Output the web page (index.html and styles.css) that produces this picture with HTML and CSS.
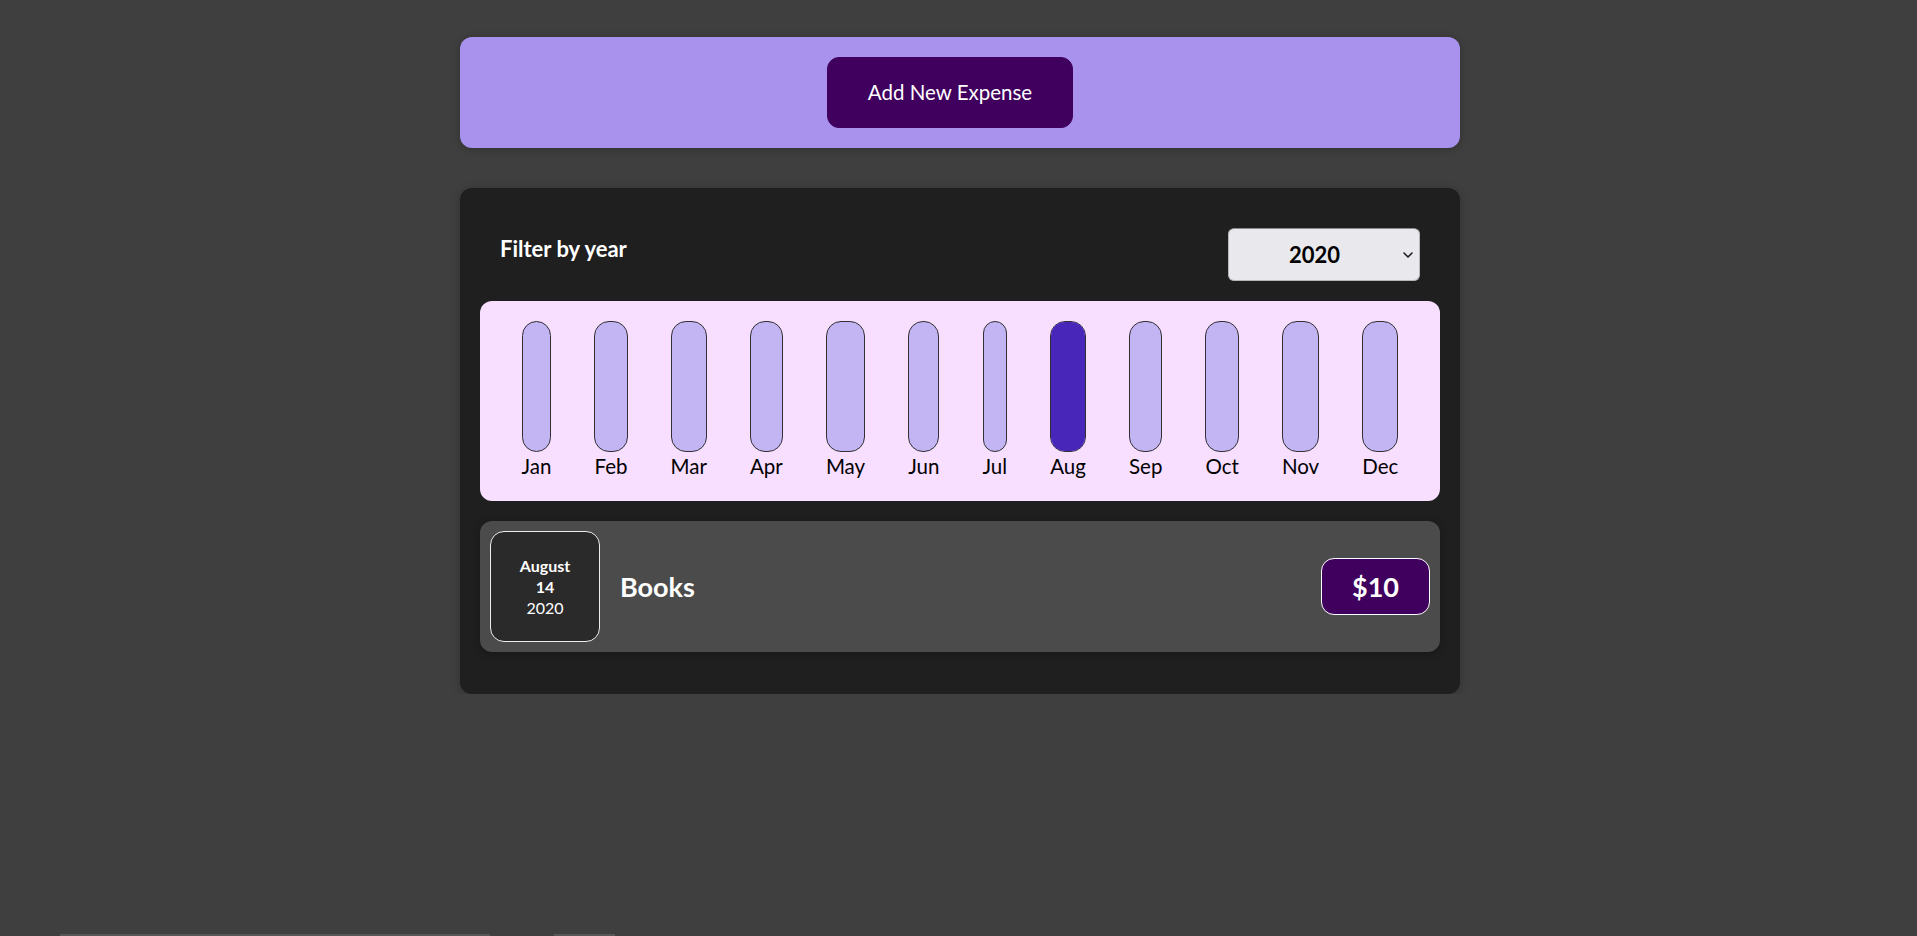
FILE: index.html
```html
<!DOCTYPE html>
<html lang="en">
<head>
<meta charset="utf-8">
<title>Expense Tracker</title>
<link rel="stylesheet" href="styles.css">
</head>
<body>
<div class="app">
  <div class="new-expense">
    <button class="new-expense__btn" type="button">Add New Expense</button>
  </div>

  <div class="expenses">
    <div class="expenses-filter">
      <div class="expenses-filter__control">
        <label class="expenses-filter__label" for="year">Filter by year</label>
        <span class="select-wrap">
          <select id="year" class="expenses-filter__select">
            <option>2022</option>
            <option>2021</option>
            <option selected>2020</option>
            <option>2019</option>
          </select>
          <svg class="select-chevron" width="10" height="6" viewBox="0 0 10 6" aria-hidden="true"><path d="M1 1 L5 5 L9 1" fill="none" stroke="#1a1a1a" stroke-width="1.5" stroke-linecap="round" stroke-linejoin="round"/></svg>
        </span>
      </div>
    </div>

    <div class="chart">
      <div class="chart-bar"><div class="chart-bar__inner"><div class="chart-bar__fill" style="height:0%"></div></div><div class="chart-bar__label">Jan</div></div>
      <div class="chart-bar"><div class="chart-bar__inner"><div class="chart-bar__fill" style="height:0%"></div></div><div class="chart-bar__label">Feb</div></div>
      <div class="chart-bar"><div class="chart-bar__inner"><div class="chart-bar__fill" style="height:0%"></div></div><div class="chart-bar__label">Mar</div></div>
      <div class="chart-bar"><div class="chart-bar__inner"><div class="chart-bar__fill" style="height:0%"></div></div><div class="chart-bar__label">Apr</div></div>
      <div class="chart-bar"><div class="chart-bar__inner"><div class="chart-bar__fill" style="height:0%"></div></div><div class="chart-bar__label">May</div></div>
      <div class="chart-bar"><div class="chart-bar__inner"><div class="chart-bar__fill" style="height:0%"></div></div><div class="chart-bar__label">Jun</div></div>
      <div class="chart-bar"><div class="chart-bar__inner"><div class="chart-bar__fill" style="height:0%"></div></div><div class="chart-bar__label">Jul</div></div>
      <div class="chart-bar"><div class="chart-bar__inner"><div class="chart-bar__fill" style="height:100%"></div></div><div class="chart-bar__label">Aug</div></div>
      <div class="chart-bar"><div class="chart-bar__inner"><div class="chart-bar__fill" style="height:0%"></div></div><div class="chart-bar__label">Sep</div></div>
      <div class="chart-bar"><div class="chart-bar__inner"><div class="chart-bar__fill" style="height:0%"></div></div><div class="chart-bar__label">Oct</div></div>
      <div class="chart-bar"><div class="chart-bar__inner"><div class="chart-bar__fill" style="height:0%"></div></div><div class="chart-bar__label">Nov</div></div>
      <div class="chart-bar"><div class="chart-bar__inner"><div class="chart-bar__fill" style="height:0%"></div></div><div class="chart-bar__label">Dec</div></div>
    </div>

    <div class="expense-item">
      <div class="expense-date">
        <div class="expense-date__month">August</div>
        <div class="expense-date__day">14</div>
        <div class="expense-date__year">2020</div>
      </div>
      <h2 class="expense-item__title">Books</h2>
      <div class="expense-item__price">$10</div>
    </div>
  </div>
</div>
<div class="bottom-bar"><span class="bottom-bar__a"></span><span class="bottom-bar__b"></span></div>
</body>
</html>
```

FILE: styles.css
```css
* {
  box-sizing: border-box;
}

html {
  font-size: 20px;
}

body {
  margin: 0;
  padding: 37px 0 0 3px;
  background-color: #3f3f3f;
  font-family: "Lato", "Open Sans", sans-serif;
  font-size: 22px;
  line-height: 1.3;
}

.new-expense {
  width: 1000px;
  margin: 0 auto 40px;
  padding: 20px;
  background-color: #a892ee;
  border-radius: 12px;
  text-align: center;
  box-shadow: 0 1px 8px rgba(0, 0, 0, 0.25);
}

.new-expense__btn {
  font: inherit;
  font-size: 20.5px;
  line-height: 29px;
  cursor: pointer;
  padding: 20px 40px;
  border: 1px solid #40005d;
  background-color: #40005d;
  color: #ffffff;
  border-radius: 12px;
  margin-right: 20px;
}

.expenses {
  width: 1000px;
  margin: 0 auto;
  padding: 20px 20px 22px;
  background-color: #1f1f1f;
  border-radius: 12px;
  box-shadow: 0 1px 8px rgba(0, 0, 0, 0.25);
}

.expenses-filter {
  color: #ffffff;
  padding: 0 20px;
}

.expenses-filter__control {
  display: flex;
  align-items: center;
  justify-content: space-between;
  margin: 20px 0;
}

.expenses-filter__label {
  font-weight: bold;
  margin-bottom: 10px;
}

.select-wrap {
  position: relative;
  display: inline-flex;
}

.expenses-filter__select {
  -webkit-appearance: none;
  appearance: none;
  font: inherit;
  font-weight: bold;
  line-height: 31px;
  color: #000000;
  width: 192px;
  height: 53px;
  padding: 10px 20px 10px 60px;
  background-color: #e9e8ed;
  border: 1px solid #b5b5bb;
  border-top-color: #8a8a8f;
  border-radius: 6px;
  text-align: left;
}

.select-chevron {
  position: absolute;
  right: 7px;
  top: 24px;
  pointer-events: none;
}

.chart {
  display: flex;
  justify-content: space-around;
  height: 200px;
  padding: 20px;
  border-radius: 12px;
  background-color: #f8dfff;
}

.chart-bar {
  height: 100%;
  display: flex;
  flex-direction: column;
  align-items: center;
}

.chart-bar__inner {
  flex: 1;
  width: 100%;
  border: 1px solid #313131;
  border-radius: 15px;
  background-color: #c3b4f3;
  overflow: hidden;
  display: flex;
  flex-direction: column;
  justify-content: flex-end;
}

.chart-bar__fill {
  width: 100%;
  background-color: #4826b9;
}

.chart-bar__label {
  color: #000000;
  white-space: nowrap;
  font-size: 20.5px;
  line-height: 29px;
}

.expense-item {
  display: flex;
  align-items: center;
  margin: 20px 0;
  padding: 10px;
  border-radius: 12px;
  background-color: #4b4b4b;
  box-shadow: 0 2px 8px rgba(0, 0, 0, 0.25);
}

.expense-date {
  display: flex;
  flex-direction: column;
  align-items: center;
  justify-content: center;
  width: 110px;
  height: 111px;
  border: 1px solid #ececec;
  border-radius: 14px;
  background-color: #2a2a2a;
  color: #ffffff;
  font-size: 16px;
  line-height: 21px;
}

.expense-date__month,
.expense-date__day {
  font-weight: bold;
}

.expense-item__title {
  flex: 1;
  margin: 0 20px;
  color: #ffffff;
  font-size: 27px;
  line-height: 35px;
  font-weight: bold;
}

.expense-item__price {
  color: #ffffff;
  font-size: 27px;
  line-height: 35px;
  font-weight: bold;
  padding: 10px 30px;
  background-color: #40005d;
  border: 1px solid #ffffff;
  border-radius: 13px;
}

.bottom-bar {
  position: fixed;
  left: 0;
  right: 0;
  bottom: 0;
  height: 2px;
  display: flex;
}

.bottom-bar__a {
  margin-left: 60px;
  width: 430px;
  background-color: #575757;
}

.bottom-bar__b {
  margin-left: 64px;
  width: 61px;
  background-color: #575757;
}
```
